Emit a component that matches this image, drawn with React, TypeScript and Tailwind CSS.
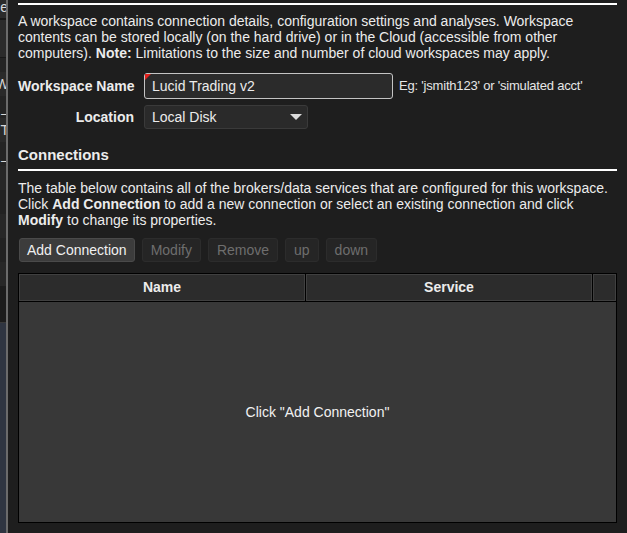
import React from 'react';

const sideRows = [
  { h: 14, bg: 'bg-[#242424]', ch: '_' },
  { h: 24, bg: 'bg-[#2a2a2a]', ch: 'W' },
  { h: 22, bg: 'bg-[#242424]', ch: '_' },
  { h: 24, bg: 'bg-[#2a2a2a]', ch: 'T' },
  { h: 24, bg: 'bg-[#242424]', ch: '_' },
  { h: 24, bg: 'bg-[#272727]', ch: '' },
  { h: 24, bg: 'bg-[#222222]', ch: '' },
  { h: 24, bg: 'bg-[#272727]', ch: '' },
  { h: 24, bg: 'bg-[#222222]', ch: '' },
  { h: 24, bg: 'bg-[#272727]', ch: '' },
  { h: 36, bg: 'bg-[#1c1c1c]', ch: '' },
];

function SideStrip() {
  return (
    <div className="w-[6px] shrink-0 flex flex-col overflow-hidden text-[14px] leading-none text-[#d8d8d8]">
      <div className="h-[18px] bg-[#2b2b2b] flex justify-end -mr-[2px]">e</div>
      <div className="h-[2px] bg-[#181818]" />
      <div className="h-[37px] bg-[#2b2b2b]" />
      <div className="h-[1px] bg-[#181818]" />
      {sideRows.map((r, i) => (
        <div key={i} style={{ height: r.h }} className={`${r.bg} flex items-center justify-end -mr-[3px]`}>
          {r.ch}
        </div>
      ))}
      <div className="h-[1px] bg-[#3a3a3a]" />
      <div className="flex-1 bg-[#2f3541]" />
    </div>
  );
}

function Btn({ label, disabled }: { label: string; disabled?: boolean }) {
  return (
    <button
      className={
        disabled
          ? 'h-[24px] px-[8px] rounded-[3px] bg-[#252525] border border-[#2c2c2c] text-[#6e6e6e] text-[14px]'
          : 'h-[24px] px-[7px] rounded-[3px] bg-[#3c3c3c] border border-[#4a4a4a] text-[#f0f0f0] text-[14px]'
      }
    >
      {label}
    </button>
  );
}

export default function App() {
  return (
    <div
      className="w-[627px] h-[533px] flex bg-[#1e1e1e] text-[#ececec] overflow-hidden"
      style={{ fontFamily: '"Liberation Sans", Arial, sans-serif' }}
    >
      <SideStrip />
      <div className="w-[2px] shrink-0 bg-[#6b6b6b]" />
      <div className="flex-1 flex flex-col pl-[10px] pr-[10px]">
        <div className="mt-[3px] h-[2px] bg-white" />
        <p className="mt-[8px] text-[14px] leading-[16px]">
          A workspace contains connection details, configuration settings and analyses. Workspace contents can be
          stored locally (on the hard drive) or in the Cloud (accessible from other computers).{' '}
          <b>Note:</b> Limitations to the size and number of cloud workspaces may apply.
        </p>

        <div className="mt-[12px] flex items-center gap-[10px]">
          <label className="w-[116px] shrink-0 whitespace-nowrap text-right font-bold text-[14px]">Workspace Name</label>
          <div className="relative shrink-0 w-[249px] h-[26px] rounded-[3px] border border-[#c4c4c4] bg-[#2b2b2b] flex items-center pl-[7px] text-[14px]">
            <span className="absolute left-0 top-0 w-0 h-0 border-t-[6px] border-r-[6px] border-t-[#e0201c] border-r-transparent" />
            Lucid Trading v2
          </div>
          <span className="ml-[-4px] whitespace-nowrap text-[13px] tracking-[-0.2px] text-[#e6e6e6]">
            Eg: 'jsmith123' or 'simulated acct'
          </span>
        </div>

        <div className="mt-[6px] flex items-center gap-[10px]">
          <label className="w-[116px] shrink-0 whitespace-nowrap text-right font-bold text-[14px]">Location</label>
          <div className="w-[164px] h-[24px] rounded-[3px] border border-[#3a3a3a] bg-[#2a2a2a] flex items-center justify-between pl-[7px] pr-[5px] text-[14px]">
            <span>Local Disk</span>
            <svg width="12" height="7" viewBox="0 0 12 7">
              <path d="M0 0 L12 0 L6 6 Z" fill="#dcdcdc" />
            </svg>
          </div>
        </div>

        <h2 className="mt-[17px] font-bold text-[15px] leading-[18px]">Connections</h2>
        <div className="mt-[5px] h-[2px] bg-white" />
        <p className="mt-[9px] text-[14px] leading-[16px]">
          The table below contains all of the brokers/data services that are configured for this workspace. Click{' '}
          <b>Add Connection</b> to add a new connection or select an existing connection and click <b>Modify</b> to
          change its properties.
        </p>

        <div className="mt-[10px] flex gap-[7px] pl-[1px]">
          <Btn label="Add Connection" />
          <Btn label="Modify" disabled />
          <Btn label="Remove" disabled />
          <Btn label="up" disabled />
          <Btn label="down" disabled />
        </div>

        <div className="mt-[11px] h-[250px] border border-black flex flex-col">
          <div className="h-[28px] flex bg-black gap-[1px] border-b border-black">
            <div className="w-[286px] bg-[#2c2c2c] border border-[#404040] flex items-center justify-center font-bold text-[14px]">
              Name
            </div>
            <div className="w-[286px] bg-[#2c2c2c] border border-[#404040] flex items-center justify-center font-bold text-[14px]">
              Service
            </div>
            <div className="flex-1 bg-[#2c2c2c] border border-[#404040]" />
          </div>
          <div className="flex-1 bg-[#383838] flex items-center justify-center text-[14px] text-[#f2f2f2]">
            Click "Add Connection"
          </div>
        </div>
      </div>
    </div>
  );
}
